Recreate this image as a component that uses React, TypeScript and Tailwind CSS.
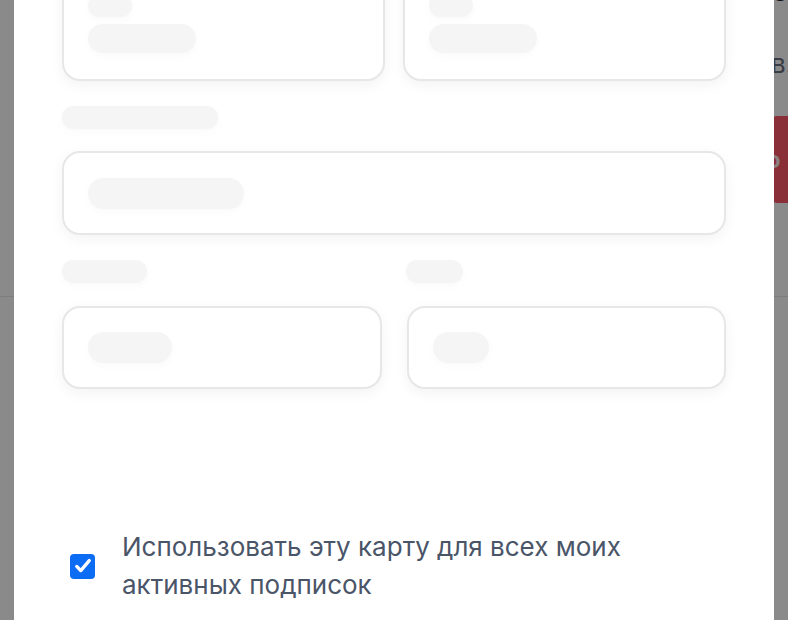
import React from "react";

function Bar({ w, h = "h-[30px]" }: { w: string; h?: string }) {
  return (
    <div
      className={`${w} ${h} rounded-full bg-[#f5f5f5] shadow-[0_3px_8px_rgba(0,0,0,0.025)]`}
    />
  );
}

function Card({ children, className = "" }: { children: React.ReactNode; className?: string }) {
  return (
    <div
      className={`rounded-[18px] border-2 border-[#e7e7e7] bg-white shadow-[0_4px_14px_rgba(0,0,0,0.05)] ${className}`}
    >
      {children}
    </div>
  );
}

export default function App() {
  return (
    <div
      className="relative h-[620px] w-[788px] overflow-hidden bg-white"
      style={{ fontFamily: "Inter, 'Noto Sans', sans-serif" }}
    >
      {/* Page underneath the dialog */}
      <div className="flex h-[620px] flex-col">
        <div className="h-[297px] border-b border-gray-200">
          <div className="ml-[771px] -mt-[22px] flex flex-col">
            <h2 className="whitespace-nowrap text-[24px] font-bold leading-[30px] text-gray-900">
              Способ оплаты и
            </h2>
            <p className="mt-[41px] whitespace-nowrap text-[26px] leading-[30px] text-[#6b7280]">
              в.
            </p>
            <button className="mt-[37px] flex h-[87px] w-[220px] items-center rounded-l-md bg-[#ff5768] text-[24px] font-semibold text-white/90">
              <span className="-ml-[5px]">о</span>
            </button>
          </div>
        </div>
      </div>

      {/* Dimmed backdrop */}
      <div className="absolute inset-0 bg-black/[0.46]" />

      {/* Dialog */}
      <div className="absolute bottom-0 left-[14px] top-0 w-[760px] overflow-hidden bg-white">
        <div className="-mt-[32px] flex flex-col px-12">
          <div className="grid grid-cols-2 gap-[18px]">
            <Card className="flex flex-col gap-[7px] px-[24px] pb-[26px] pt-[24px]">
              <Bar w="w-[44px]" h="h-[23px]" />
              <Bar w="w-[108px]" h="h-[29px]" />
            </Card>
            <Card className="flex flex-col gap-[7px] px-[24px] pb-[26px] pt-[24px]">
              <Bar w="w-[44px]" h="h-[23px]" />
              <Bar w="w-[108px]" h="h-[29px]" />
            </Card>
          </div>

          <div className="mt-[25px]">
            <Bar w="w-[156px]" h="h-[23px]" />
          </div>
          <Card className="mt-[22px] flex h-[84px] items-center px-[24px]">
            <Bar w="w-[156px]" h="h-[31px]" />
          </Card>

          <div className="mt-[25px] grid grid-cols-2 gap-[25px]">
            <div className="flex flex-col gap-[23px]">
              <Bar w="w-[85px]" h="h-[23px]" />
              <Card className="flex h-[83px] items-center px-[24px]">
                <Bar w="w-[84px]" h="h-[31px]" />
              </Card>
            </div>
            <div className="flex flex-col gap-[23px]">
              <div className="-ml-px">
                <Bar w="w-[57px]" h="h-[23px]" />
              </div>
              <Card className="flex h-[83px] items-center px-[24px]">
                <Bar w="w-[56px]" h="h-[31px]" />
              </Card>
            </div>
          </div>

          <label className="mt-[139px] flex items-center gap-[27px] pl-2">
            <span className="flex h-[25px] w-[25px] shrink-0 items-center justify-center rounded-[4px] bg-[#0c6cf4]">
              <svg viewBox="0 0 24 24" className="h-[20px] w-[20px]" fill="none">
                <path
                  d="M4.5 12.5l4.8 5L19.5 5.5"
                  stroke="white"
                  strokeWidth="4"
                  strokeLinecap="round"
                  strokeLinejoin="round"
                />
              </svg>
            </span>
            <span className="text-[26px] leading-[38px] text-[#4a5568]">
              Использовать эту карту для всех моих
              <br />
              активных подписок
            </span>
          </label>
        </div>
      </div>
    </div>
  );
}
